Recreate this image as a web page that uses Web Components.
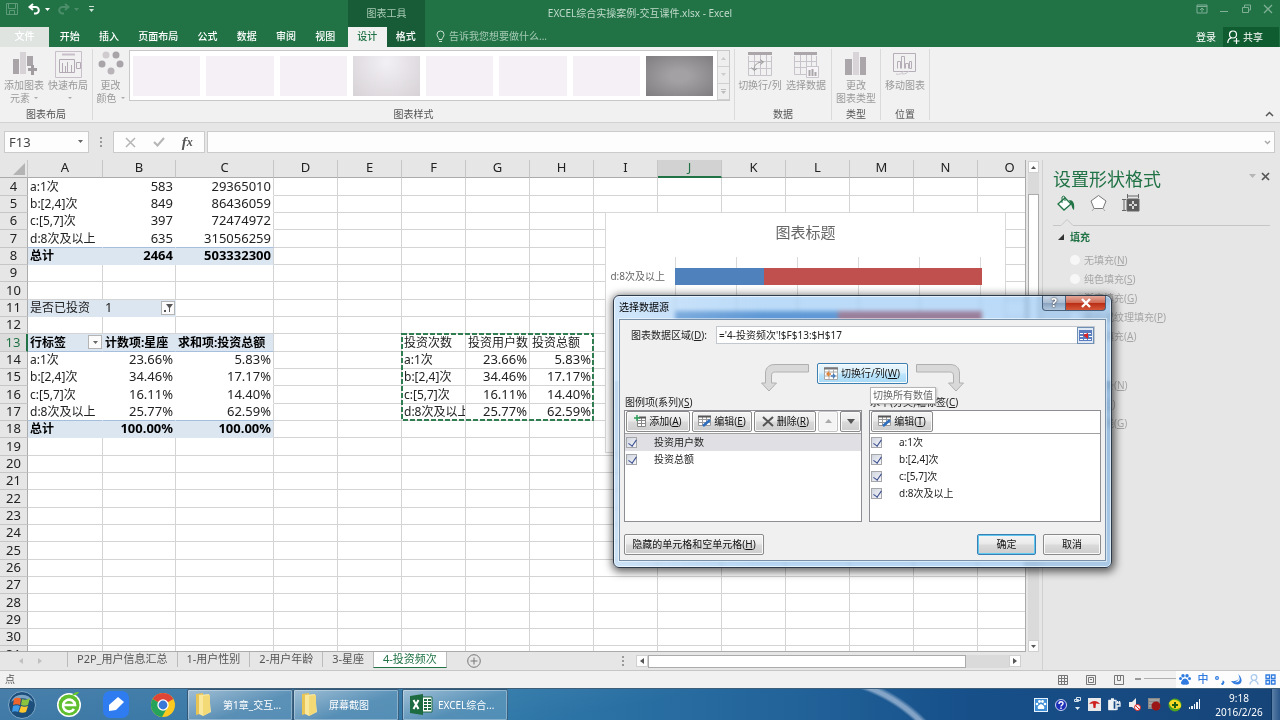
<!DOCTYPE html>
<html lang="zh-CN">
<head>
<meta charset="utf-8">
<title>EXCEL综合实操案例-交互课件.xlsx - Excel</title>
<style>
    html, body { margin: 0; height: 100%; }
    body {
        font: 10px/14px "Noto Sans", "Noto Sans CJK SC", sans-serif;
        color: #333;
        overflow: hidden;
        --green: #217346;
        --line: #d4d4d4;
    }
</style>
</head>
<body>
<excel-app></excel-app>

<script>
// Shared by every element: buttons and fields start from the page font
const base = `
    * { box-sizing: border-box; }
    button, input, select { font: inherit; color: inherit; margin: 0; padding: 0; border: 0; background: none; border-radius: 0; outline: 0; }
    button { display: flex; align-items: center; justify-content: center; white-space: nowrap; }
    a { color: inherit; text-decoration: none; }
    svg { display: block; flex: none; }
`;

function define(name, html, setup) {
    const template = document.createElement('template');
    template.innerHTML = html.replace('<style>', '<style>' + base);

    customElements.define(name, class extends HTMLElement {
        constructor() {
            super();
            this.attachShadow({mode: 'open'});
            this.shadowRoot.appendChild(template.content.cloneNode(true));
        }

        connectedCallback() {
            if (setup) setup(this, this.shadowRoot);
        }
    });
}

/* ---------- title bar and ribbon tabs ---------- */

define('excel-header', `
    <style>
        :host {
            display: grid;
            grid-template-columns: 348px 77px 1fr auto;
            grid-template-rows: 27px 20px;
            background: var(--green);
            color: #fff;
            flex: none;
        }
        .quick { grid-area: 1 / 1; display: flex; align-items: center; gap: 7px; padding: 0 0 9px 6px; }
        .quick button:nth-child(2) { margin-left: 3px; }
        .ctx { grid-area: 1 / 2; background: #185c37; color: #a9cbb7; display: flex; align-items: center; justify-content: center; padding-bottom: 1px; }
        .title { grid-area: 1 / 1 / 2 / -1; justify-self: center; align-self: center; color: #c0dacb; padding-bottom: 1px; }
        .win { grid-area: 1 / 4; display: flex; gap: 10px; padding: 3px 6px 0 0; align-items: flex-start; color: #7fb096; }
        nav { display: flex; }
        nav a { display: flex; align-items: center; justify-content: center; font-weight: 500; padding-bottom: 2px; }
        .tabs { grid-area: 2 / 1; padding-right: 3px; }
        .tabs a { flex: auto; }
        .tabs .file { flex: none; width: 49px; background: #dfe4e1; color: #fff; margin-right: 1px; }
        .tools { grid-area: 2 / 2; background: #185c37; }
        .tools a { flex: 1; }
        .tools .on { background: #f1f1f1; color: var(--green); }
        .tell { grid-area: 2 / 3; display: flex; align-items: center; gap: 4px; padding: 0 0 2px 11px; color: #a5c9b4; }
        .tell input { width: 160px; }
        .tell input::placeholder { color: #a5c9b4; }
        .user { grid-area: 2 / 4; display: flex; align-items: stretch; gap: 7px; }
        .share { background: #0e5c30; width: 56px; gap: 3px; justify-content: flex-start; padding-left: 4px; }
    </style>
    <div class="quick">
        <button aria-label="保存"><svg width="12" height="12" fill="none" stroke="#5e9b79"><path d="M.5.5h11v11H.5zM2.5.5v5h7v-5M3.500 11.500v-4h5v4"/></svg></button>
        <button aria-label="撤消"><svg width="13" height="12" fill="none" stroke="#fff" stroke-width="2"><path d="M5 1 1.500 4 5 7M2 4h5.500a3.300 3.300 0 0 1 0 6.600H6"/></svg></button>
        <svg width="5" height="3" style="margin-left:-3px"><path d="M0 0h5L2.500 3z" fill="#fff"/></svg>
        <button aria-label="恢复"><svg width="13" height="12" fill="none" stroke="#4b8e69" stroke-width="2"><path d="M8 1l3.500 3L8 7M11 4H5.500a3.300 3.300 0 0 0 0 6.600H7"/></svg></button>
        <svg width="5" height="3" style="margin-left:-3px"><path d="M0 0h5L2.500 3z" fill="#4b8e69"/></svg>
        <svg width="5" height="6" style="margin-left:3px"><path d="M0 0h5v1H0zM0 3h5L2.500 6z" fill="#cfe3d7"/></svg>
    </div>
    <div class="ctx">图表工具</div>
    <div class="title">EXCEL综合实操案例-交互课件.xlsx - Excel</div>
    <div class="win">
        <button aria-label="功能区显示选项"><svg width="12" height="12" fill="none" stroke="currentColor"><path d="M1 2h10v8H1zM1 3.500h10M6 9V5M4 7l2-2 2 2"/></svg></button>
        <button aria-label="最小化"><svg width="12" height="12" stroke="currentColor"><path d="M2 8.500h8"/></svg></button>
        <button aria-label="还原"><svg width="12" height="12" fill="none" stroke="currentColor"><path d="M2.500 4.500h6v5h-6zM4.500 4V2h6v5H9"/></svg></button>
        <button aria-label="关闭"><svg width="12" height="12" stroke="currentColor" stroke-width="1.300"><path d="M2 2l8 8M10 2l-8 8"/></svg></button>
    </div>
    <nav class="tabs">
        <a href="#" class="file">文件</a><a href="#">开始</a><a href="#">插入</a><a href="#">页面布局</a><a href="#">公式</a><a href="#">数据</a><a href="#">审阅</a><a href="#">视图</a>
    </nav>
    <nav class="tools"><a href="#" class="on">设计</a><a href="#">格式</a></nav>
    <div class="tell">
        <svg width="9" height="13" fill="none" stroke="#c8dfd1"><path d="M3 9.500C3 7.500 1 7 1 4.500a3.500 3.500 0 0 1 7 0C8 7 6 7.500 6 9.500zM3 11.500h3"/></svg>
        <input placeholder="告诉我您想要做什么..." aria-label="告诉我您想要做什么">
    </div>
    <div class="user">
        <button>登录</button>
        <button class="share"><svg width="13" height="14" fill="none" stroke="#fff" stroke-width="1.200"><circle cx="6" cy="4.500" r="3.500"/><path d="M.8 13c0-3 1.600-4.700 3.600-5.200M9.500 8v6M6.500 11h6"/></svg>共享</button>
    </div>
`);

/* ---------- ribbon ---------- */

define('ribbon-group', `
    <style>
        :host { display: flex; flex-direction: column; border-right: 1px solid #dadada; margin: 2px 0; flex: none; }
        .items { flex: 1; display: flex; justify-content: center; }
        .label { text-align: center; color: #555; line-height: 12px; }
    </style>
    <div class="items"><slot></slot></div>
    <div class="label"></div>
`, (el, root) => {
    root.querySelector('.label').textContent = el.getAttribute('label');
});

define('ribbon-button', `
    <style>
        :host { display: block; color: #999; }
        button { flex-direction: column; justify-content: flex-start; width: 100%; line-height: 13px; padding-top: 2px; }
        .icon { height: 28px; }
        .text { white-space: pre-line; text-align: center; }
        :host([menu]) .text::after { content: ""; display: inline-block; margin-left: 4px; vertical-align: 3px; border: 2px solid transparent; border-top-color: #aaa; border-bottom: 0; }
    </style>
    <button disabled><span class="icon"><slot></slot></span><span class="text"></span></button>
`, (el, root) => {
    root.querySelector('.text').textContent = el.getAttribute('text').replace('|', '\n');
});

define('excel-ribbon', `
    <style>
        :host { display: flex; height: 76px; background: #f1f1f1; border-bottom: 1px solid #d2d2d2; flex: none; position: relative; }
        ribbon-button { width: 44px; }
        ribbon-button.wide { width: 46px; }
        .gallery { display: flex; gap: 6px; height: 51px; margin: 1px 0 0 1px; padding: 5px 0 0 3px; background: #fff; border: 1px solid #c8c8c8; flex: 1; }
        .gallery i { flex: 1; height: 40px; background: #f4f0f6; }
        .gallery i.light { background: radial-gradient(ellipse at 50% 15%, #f3f0f5, #d6d2d6); }
        .gallery i.dark { background: radial-gradient(ellipse, #a3a1a3 20%, #7f7d7f); }
        .scroll { display: flex; flex-direction: column; width: 12px; height: 49px; margin: -5px 0 0 -2px; border-left: 1px solid #d0d0d0; background: #eee; }
        .scroll button { flex: 1; border-bottom: 1px solid #d0d0d0; }
        .collapse { position: absolute; right: 6px; bottom: 5px; }
    </style>
    <ribbon-group label="图表布局" style="width:93px">
        <ribbon-button menu text="添加图表|元素"><svg width="25" height="25"><path d="M1 8h6v15H1z" fill="#a8a4a8"/><path d="M8 1h6v22H8z" fill="#d6d2d6"/><path d="M15 5h6v10h-6z" fill="#a8a4a8"/><path d="M16 18.500h9M20.500 14v10" stroke="#a09ca0" stroke-width="3"/></svg></ribbon-button>
        <ribbon-button menu text="快速布局|"><svg width="27" height="27" fill="none" stroke="#c9bfcb"><path d="M.5.5h26v26H.5z"/><path d="M7 3.500h13" stroke-width="2"/><path d="M4.500 8.500h15v13h-15zM7.500 21v-9M10.500 21v-6M12.500 21V11M16.500 21v-7M21.500 11.500h4v6h-4z" stroke="#b2a9b5"/></svg></ribbon-button>
    </ribbon-group>
    <ribbon-group label="图表样式" style="width:642px">
        <ribbon-button menu text="更改|颜色" style="width:35px"><svg width="26" height="26" fill="#a8a4a8"><circle cx="8" cy="4" r="3.500" fill="#cfcbcf"/><circle cx="18" cy="4" r="3.500"/><circle cx="4" cy="13" r="3.500"/><circle cx="22" cy="13" r="3.500"/><circle cx="13" cy="20" r="3.500" fill="#b8b4b8"/></svg></ribbon-button>
        <div class="gallery">
            <i></i><i></i><i></i><i class="light"></i><i></i><i></i><i></i><i class="dark"></i>
            <div class="scroll">
                <button aria-label="上一行"><svg width="5" height="3"><path d="M0 3h5L2.500 0z" fill="#ccc"/></svg></button>
                <button aria-label="下一行"><svg width="5" height="3"><path d="M0 0h5L2.500 3z" fill="#ccc"/></svg></button>
                <button aria-label="其他"><svg width="5" height="5"><path d="M0 0h5v1H0zM0 2h5L2.500 5z" fill="#bbb"/></svg></button>
            </div>
        </div>
        <span style="width:4px"></span>
    </ribbon-group>
    <ribbon-group label="数据" style="width:97px">
        <ribbon-button class="wide" text="切换行/列"><svg width="26" height="26" fill="none" stroke="#c9c3cb"><path d="M1.500 5v19.500h23V5M1 10.500h24M1 17.500h24M7.500 4v20M13.500 4v20M19.500 4v20"/><path d="M1 2.500h24" stroke="#aaa6aa" stroke-width="3"/><path d="M7 19c0-5 3-8 9-8M13 8.500l3.500 2.500-3 2.500M4.500 16.500 7 19.500l3-2" stroke="#999"/></svg></ribbon-button>
        <ribbon-button class="wide" text="选择数据"><svg width="26" height="27" fill="none" stroke="#c9c3cb"><path d="M1.500 5v18.500h22V5M1 10.500h23M1 16.500h23M7.500 4v19M13.500 4v19M18.500 4v19"/><path d="M1 2.500h23" stroke="#aaa6aa" stroke-width="3"/><path d="M13.500 15.500h12v11h-12z" fill="#f6f4f6"/><path d="M16.500 25v-6M19.500 25v-7M22.500 25v-4" stroke="#aaa6aa" stroke-width="2"/></svg></ribbon-button>
    </ribbon-group>
    <ribbon-group label="类型" style="width:49px">
        <ribbon-button class="wide" text="更改|图表类型"><svg width="22" height="25"><path d="M0 8h7v16H0zM15 6h6v18h-6z" fill="#aaa6aa"/><path d="M8 1h6v23H8z" fill="#d8d4d8"/></svg></ribbon-button>
    </ribbon-group>
    <ribbon-group label="位置" style="width:49px">
        <ribbon-button class="wide" text="移动图表"><svg width="24" height="25" fill="none" stroke="#b5adb8"><path d="M.5 2.500h22v18H.5z"/><path d="M4.500 17.500v-7h3v7M8.500 17.500v-12h3v12M12.500 17.500v-5h3v5M16.500 17.500v-7h2v7z"/><path d="M3 23c4 1 6-1 8-3M9 23c4 0 5-1 7-3" stroke="#c9c3cb"/></svg></ribbon-button>
    </ribbon-group>
    <button class="collapse" aria-label="折叠功能区"><svg width="9" height="6" fill="none" stroke="#555" stroke-width="1.500"><path d="M1 5l3.500-3.500L8 5"/></svg></button>
`);

/* ---------- formula bar ---------- */

define('formula-bar', `
    <style>
        :host { display: flex; align-items: flex-start; height: 37px; padding: 8px 5px 0 4px; background: #e6e6e6; flex: none; }
        .box { display: flex; align-items: center; height: 22px; background: #fdfdfd; border: 1px solid #cbcbcb; }
        .name { width: 85px; padding: 0 5px 1px 4px; font-size: 13px; }
        .name input { width: 100%; min-width: 0; color: #444; }
        .dots { width: 24px; height: 22px; padding: 5px 11px; }
        .fx { width: 92px; justify-content: space-around; padding: 0 3px; }
        .text { flex: 1; margin-left: 2px; padding-right: 3px; }
        .text input { flex: 1; }
        .fx button:last-child { font: italic 700 15px/18px "Liberation Serif", serif; color: #555; }
        .fx small { font-size: 12px; }
    </style>
    <div class="box name"><input value="F13" aria-label="名称框"><svg width="5" height="3"><path d="M0 0h5L2.500 3z" fill="#666"/></svg></div>
    <svg class="dots" width="24" height="22" fill="#999"><path d="M0 1h2v2H0zM0 5h2v2H0zM0 9h2v2H0z"/></svg>
    <div class="box fx">
        <button aria-label="取消"><svg width="11" height="11" stroke="#b5b5b5" stroke-width="1.500"><path d="M1 1l9 9M10 1l-9 9"/></svg></button>
        <button aria-label="输入"><svg width="12" height="10" fill="none" stroke="#b5b5b5" stroke-width="2"><path d="M1 5l3.500 3.500L11 1"/></svg></button>
        <button>f<small>x</small></button>
    </div>
    <div class="box text"><input aria-label="编辑栏"><svg width="7" height="5" fill="none" stroke="#aaa" stroke-width="1.500"><path d="M1 1l2.500 2.500L6 1"/></svg></div>
`);

/* ---------- worksheet ---------- */

const columns = 'ABCDEFGHIJKLMNO'.split('');
const widths = {A: 75, B: 73, C: 98};
const cells = {
    A4: 'a:1次', B4: '583', C4: '29365010',
    A5: 'b:[2,4]次', B5: '849', C5: '86436059',
    A6: 'c:[5,7]次', B6: '397', C6: '72474972',
    A7: 'd:8次及以上', B7: '635', C7: '315056259',
    A8: '总计', B8: '2464', C8: '503332300',
    A11: '是否已投资', B11: '1',
    A13: '行标签', B13: '计数项:星座', C13: '求和项:投资总额',
    A14: 'a:1次', B14: '23.66%', C14: '5.83%',
    A15: 'b:[2,4]次', B15: '34.46%', C15: '17.17%',
    A16: 'c:[5,7]次', B16: '16.11%', C16: '14.40%',
    A17: 'd:8次及以上', B17: '25.77%', C17: '62.59%',
    A18: '总计', B18: '100.00%', C18: '100.00%',
    F13: '投资次数', G13: '投资用户数', H13: '投资总额',
    F14: 'a:1次', G14: '23.66%', H14: '5.83%',
    F15: 'b:[2,4]次', G15: '34.46%', H15: '17.17%',
    F16: 'c:[5,7]次', G16: '16.11%', H16: '14.40%',
    F17: 'd:8次及以上', G17: '25.77%', H17: '62.59%'
};

define('sheet-grid', `
    <style>
        :host { display: block; flex: 1; min-width: 0; position: relative; overflow: hidden; background: #fff; border-right: 1px solid #ababab; border-bottom: 1px solid #ababab; }
        table { table-layout: fixed; width: 1042px; border-spacing: 0; font-size: 12px; line-height: 15px; color: #222; }
        th, td { padding: 0 2px 1px; height: 17px; border: 0 solid var(--line); border-width: 0 1px 1px 0; white-space: nowrap; text-align: left; }
        thead th { height: 18px; padding: 0 0 2px; text-align: center; font-size: 13px; font-weight: 400; background: #e6e6e6; border-color: #c6c6c6; border-bottom-color: #ababab; }
        thead th.on { background: #d2d2d2; color: var(--green); border-bottom: 2px solid var(--green); padding-bottom: 1px; }
        tbody th { padding: 0 0 1px; text-align: center; font-size: 13px; font-weight: 400; background: #e6e6e6; border-color: #c6c6c6; border-right-color: #ababab; }
        tbody th.on { background: #dcdcdc; color: var(--green); border-right: 2px solid var(--green); }
        tr:nth-child(3n+1) > * { height: 18px; }
        .num { font-size: 13px; text-align: right; }
        .clip { overflow: hidden; }
        .pivot { border-color: #fff; }
        .pivot.edge { border-right-color: var(--line); }
        .fill { background: #dce6f1; border-color: #dce6f1; }
        .bold { font-weight: 700; color: #000; }
        .line { border-bottom-color: #a6bfdd; }
        td .cell { display: flex; align-items: center; justify-content: space-between; height: 15px; }
        td button { width: 14px; height: 14px; background: #fbfbfb; border: 1px solid #b4b4b4; margin-right: -2px; }
        .ants { position: absolute; left: 401px; top: 173px; width: 193px; height: 88px; fill: none; stroke: #2f7d50; stroke-width: 2; stroke-dasharray: 5 2; }
        .corner { display: block; margin: 3px 2px 0 auto; }
    </style>
    <table>
        <colgroup><col style="width:28px"></colgroup>
        <thead><tr><th><svg class="corner" width="12" height="12"><path d="M12 0v12H0z" fill="#b4b4b4"/></svg></th></tr></thead>
        <tbody></tbody>
    </table>
    <svg class="ants"><rect x="1" y="1" width="191" height="86"/></svg>
    <slot></slot>
`, (el, root) => {
    const group = root.querySelector('colgroup');
    const head = root.querySelector('thead tr');
    const body = root.querySelector('tbody');

    columns.forEach(name => {
        const col = document.createElement('col');
        col.style.width = (widths[name] || 64) + 'px';
        group.appendChild(col);
        const th = document.createElement('th');
        th.textContent = name;
        if (name === 'J') th.className = 'on';
        head.appendChild(th);
    });

    for (let row = 4; row <= 31; row++) {
        const tr = body.insertRow();
        const th = document.createElement('th');
        th.textContent = row;
        if (row === 13) th.className = 'on';
        tr.appendChild(th);

        columns.forEach(name => {
            const td = tr.insertCell();
            const value = cells[name + row] || '';
            td.textContent = value;
            if (/^[\d.]+%?$/.test(value)) td.classList.add('num');
            // the neighbour is filled, so the long label stops at the cell edge
            if (name + row === 'F17') td.classList.add('clip');
            if (name <= 'C' && (row <= 8 || row >= 13) && row <= 18) {
                td.classList.add('pivot');
                if (name === 'C') td.classList.add('edge');
                if (row === 8 || row === 13 || row === 18) td.classList.add('fill', 'bold');
                if (row === 7 || row === 13 || row === 17) td.classList.add('line');
            }
            if (row === 11 && name <= 'B') {
                td.classList.add('fill');
                td.style.textAlign = 'left';
            }
            if (name + row === 'A13' || name + row === 'B11') {
                const arrow = row === 11
                    ? '<svg width="9" height="8"><path d="M2 0h7L6 4v4H5V4zM0 6h2v2H0z" fill="#555"/></svg>'
                    : '<svg width="5" height="3"><path d="M0 0h5L2.500 3z" fill="#666"/></svg>';
                td.innerHTML = '<div class="cell"><span>' + value + '</span><button aria-label="筛选">' + arrow + '</button></div>';
            }
        });
    }
});

define('bar-chart', `
    <style>
        :host { display: flex; flex-direction: column; position: absolute; left: 605px; top: 52px; width: 401px; height: 241px; background: #fff; border: 1px solid #d9d9d9; color: #666; }
        h2 { margin: 9px 0 15px; font-size: 15px; line-height: 20px; font-weight: 400; text-align: center; }
        .plot { display: grid; grid-template-columns: 69px 307px; grid-auto-rows: 43px; background: repeating-linear-gradient(90deg, #d9d9d9 0 1px, transparent 1px 61px) 69px 0 / 307px 100% no-repeat; }
        .name { padding: 12px 10px 0 0; text-align: right; }
        .bar { display: flex; height: 17px; margin-top: 11px; }
        .bar i { background: #4f81bd; }
        .bar b { flex: 1; background: #c0504d; }
    </style>
    <h2>图表标题</h2>
    <div class="plot"></div>
`, (el, root) => {
    root.querySelector('.plot').innerHTML = [
        ['d:8次及以上', 29], ['', 53], ['', 67], ['', 80]
    ].map(([name, share]) => `<span class="name">${name}</span><div class="bar"><i style="width:${share}%"></i><b></b></div>`).join('');
});

define('v-scroll', `
    <style>
        :host { display: flex; flex-direction: column; width: 17px; padding: 1px 3px 0 2px; background: #e6e6e6; border-right: 1px solid #d0d0d0; }
        button { height: 12px; background: #fdfdfd; border: 1px solid #d0d0d0; }
        .track { flex: 1; background: #dadada; padding-top: 21px; }
        .thumb { height: 70%; background: #fff; border: 1px solid #ababab; }
    </style>
    <button aria-label="向上"><svg width="5" height="3"><path d="M0 3h5L2.500 0z" fill="#555"/></svg></button>
    <div class="track"><div class="thumb"></div></div>
    <button aria-label="向下"><svg width="5" height="3"><path d="M0 0h5L2.500 3z" fill="#555"/></svg></button>
`);

define('sheet-tabs', `
    <style>
        :host { display: flex; position: relative; height: 18px; background: #e6e6e6; border-right: 1px solid #d0d0d0; font-size: 11px; color: #555; }
        .arrows { display: flex; gap: 15px; align-items: center; width: 67px; padding-left: 19px; }
        a { display: flex; align-items: flex-start; padding: 0 9px; height: 15px; line-height: 14px; border-left: 1px solid #bbb; white-space: nowrap; }
        a.on { background: #fff; color: var(--green); border-bottom: 1px solid var(--green); border-right: 1px solid #bbb; height: 16px; }
        .add { margin-left: 20px; align-self: center; }
        .scroll { display: flex; align-items: center; margin: 2px 21px 2px auto; width: 399px; }
        .scroll button { width: 12px; height: 12px; background: #fdfdfd; border: 1px solid #d0d0d0; }
        .track { flex: 1; height: 13px; background: #dadada; }
        .thumb { width: 88%; height: 13px; background: #fff; border: 1px solid #ababab; }
        .dots { margin-right: 12px; }
    </style>
    <span class="arrows"><svg width="4" height="6"><path d="M4 0v6L0 3z" fill="#c0c0c0"/></svg><svg width="4" height="6"><path d="M0 0v6l4-3z" fill="#c0c0c0"/></svg></span>
    <a href="#">P2P_用户信息汇总</a><a href="#">1-用户性别</a><a href="#">2-用户年龄</a><a href="#">3-星座</a><a href="#" class="on">4-投资频次</a>
    <button class="add" aria-label="新工作表"><svg width="14" height="14" fill="none" stroke="#777"><circle cx="7" cy="7" r="6.300"/><path d="M3.500 7h7M7 3.500v7"/></svg></button>
    <div class="scroll">
        <svg class="dots" width="2" height="10" fill="#999"><path d="M0 0h2v2H0zM0 4h2v2H0zM0 8h2v2H0z"/></svg>
        <button aria-label="向左"><svg width="4" height="6"><path d="M4 0v6L0 3z" fill="#555"/></svg></button>
        <div class="track"><div class="thumb"></div></div>
        <button aria-label="向右"><svg width="4" height="6"><path d="M0 0v6l4-3z" fill="#555"/></svg></button>
    </div>
`);

/* ---------- task pane ---------- */

define('format-pane', `
    <style>
        :host { display: block; width: 237px; padding: 7px 10px 0; background: #e6e6e6; flex: none; color: #a6a6a6; }
        header { display: flex; align-items: flex-start; }
        h1 { flex: 1; margin: 0; font-size: 18px; line-height: 24px; font-weight: 400; color: var(--green); }
        header svg { margin-left: 10px; }
        .icons { display: flex; align-items: center; gap: 14px; height: 24px; padding-left: 4px; }
        .rule { display: block; width: 100%; height: 8px; margin: 3px 0 3px; }
        h3 { display: flex; align-items: center; gap: 6px; margin: 0 0 5px; padding-left: 5px; height: 16px; font-size: 10px; color: var(--green); }
        fieldset + h3 { margin-top: 9px; }
        label { display: flex; align-items: center; height: 19px; padding-left: 17px; gap: 4px; }
        input { appearance: none; width: 10px; height: 10px; margin: 0; border-radius: 5px; background: #f7f7f7; }
        fieldset { border: 0; margin: 0; padding: 0; }
    </style>
    <header>
        <h1>设置形状格式</h1>
        <svg width="7" height="4" style="margin-top:7px"><path d="M0 0h7L3.500 4z" fill="#b5b5b5"/></svg>
        <button aria-label="关闭"><svg width="9" height="9" stroke="#555" stroke-width="1.700" style="margin:5px 0 0 5px"><path d="M1 1l7 7M8 1 1 8"/></svg></button>
    </header>
    <div class="icons">
        <svg width="19" height="17"><path d="M1 9l7-6 6 6-7 6z" fill="#fff" stroke="#217346" stroke-width="1.300"/><path d="M5 8V2a2 2 0 0 1 3 0v4" fill="none" stroke="#217346"/><path d="M12 5c4 0 6 3 5 10-2-1-2-4-3-6z" fill="#217346"/></svg>
        <svg width="17" height="18" fill="#fff" stroke="#777"><path d="M8.500 1.500 16 7l-3 7.500H4L1 7z"/><path d="M4 14.500 2 17M13 14.500l2 2.500" stroke="#aaa"/></svg>
        <svg width="19" height="18" fill="none" stroke="#666"><path d="M1 5.500h4M3 5.500v11M1 16.500h4M6.500 0v4M6.500 2h11M17.500 0v4"/><path d="M6 5h12v12H6z" fill="#5a5a5a"/><path d="M12 7v3M12 12v3M8 11h3M13 11h3" stroke="#fff" stroke-width="1.500"/></svg>
    </div>
    <svg class="rule" fill="none" stroke="#c6c6c6"><path d="M0 7.500h8l6-6 6 6h400"/></svg>
    <h3><svg width="6" height="6"><path d="M6 0v6H0z" fill="#333"/></svg>填充</h3>
    <fieldset disabled>
        <label><input type="radio" name="fill"><span>无填充(<u>N</u>)</span></label>
        <label><input type="radio" name="fill"><span>纯色填充(<u>S</u>)</span></label>
        <label><input type="radio" name="fill"><span>渐变填充(<u>G</u>)</span></label>
        <label><input type="radio" name="fill"><span>图片或纹理填充(<u>P</u>)</span></label>
        <label><input type="radio" name="fill"><span>图案填充(<u>A</u>)</span></label>
    </fieldset>
    <h3><svg width="6" height="6"><path d="M6 0v6H0z" fill="#333"/></svg>线条</h3>
    <fieldset disabled>
        <label><input type="radio" name="stroke"><span>无线条(<u>N</u>)</span></label>
        <label><input type="radio" name="stroke"><span>实线(<u>S</u>)</span></label>
        <label><input type="radio" name="stroke"><span>渐变线(<u>G</u>)</span></label>
    </fieldset>
`);

/* ---------- data source dialog ---------- */

define('dialog-button', `
    <style>
        :host { display: block; }
        button { width: 100%; height: 21px; gap: 3px; padding-bottom: 1px; border: 1px solid #8a8a8a; border-radius: 2px; color: #111; background: linear-gradient(#f5f5f5, #e9e9e9 48%, #dadada 52%, #cdcdcd); box-shadow: inset 0 0 0 1px #fafafa; }
        :host(.hot) button { border-color: #3c7fb1; background: linear-gradient(#eaf6fd, #d9f0fc 48%, #bee6fd 52%, #a7d9f5); }
        :host(.default) button { border-color: #3c7fb1; box-shadow: inset 0 0 0 1px #5fc8f0; }
        :host(.off) button { background: #f4f4f4; border-color: #c4c4c4; }
    </style>
    <button><slot></slot></button>
`);

define('check-list', `
    <style>
        :host { display: block; background: #fff; border: 1px solid #8c8e94; height: 112px; }
        .bar { display: flex; gap: 2px; height: 23px; padding-left: 1px; border-bottom: 1px solid #a0a0a0; }
        label { display: flex; align-items: center; height: 17px; padding-left: 1px; gap: 17px; color: #222; }
        label span { padding-bottom: 1px; }
        :host([selected]) label:first-child { background: #e0dfe3; }
        input { appearance: none; width: 11px; height: 11px; border: 1px solid #a5a6aa; background: linear-gradient(135deg, #d0d5df, #f5f5f9); position: relative; }
        input:checked::after { content: ""; position: absolute; left: 3px; top: 0; width: 4px; height: 7px; border: solid #33488c; border-width: 0 1px 1px 0; transform: rotate(35deg); }
    </style>
    <div class="bar"><slot></slot></div>
    <div class="list"></div>
`, (el, root) => {
    root.querySelector('.list').innerHTML = el.getAttribute('items').split('|')
        .map(item => `<label><input type="checkbox" checked><span>${item}</span></label>`).join('');
});

define('source-dialog', `
    <style>
        :host {
            display: flex; flex-direction: column;
            position: absolute; left: 613px; top: 135px; width: 499px;
            padding: 0 5px 6px;
            border: 1px solid #2d3a4a; border-radius: 6px;
            background: linear-gradient(90deg, rgba(255,255,255,.3), transparent 30%), linear-gradient(rgba(120,190,255,.45) 84px, rgba(70,150,225,.45) 86px, rgba(110,180,245,.45));
            backdrop-filter: blur(2px) brightness(.95);
            box-shadow: inset 0 0 0 1px rgba(255,255,255,.6), 1px 2px 8px 2px rgba(0,0,0,.6);
            color: #222;
        }
        header { display: flex; height: 23px; align-items: flex-start; }
        header span { flex: 1; padding-top: 4px; color: #000; }
        header button { height: 15px; border: 1px solid #49617c; border-top: 0; background: linear-gradient(#c9d6e6, #a9bcd2 48%, #8aa3bf 52%, #b0c6dd); }
        .help { width: 24px; border-radius: 0 0 0 4px; font-weight: 700; font-size: 12px; color: #fff; text-shadow: 0 0 2px #000; }
        header .close { width: 40px; border-radius: 0 0 4px 0; border-left: 0; background: linear-gradient(#e5a89a, #cf6a55 48%, #b92d14 52%, #d5583a); }
        .client { display: flex; flex-direction: column; height: 242px; padding: 6px 4px 0; background: #f0f0f0; border: 1px solid #7890a8; box-shadow: 0 0 0 1px rgba(255,255,255,.5); }
        .range { display: flex; align-items: center; padding: 0 6px 0 7px; }
        .range label { width: 85px; }
        .range div { flex: 1; display: flex; align-items: center; height: 18px; background: #fff; border: 1px solid #c3c7ce; }
        .range input { flex: 1; padding-left: 2px; }
        .range button { width: 17px; height: 17px; border: 1px solid #6f8fb5; background: #dfe8f5; }
        .switch { display: grid; grid-template-columns: 1fr 91px 1fr; gap: 7px; margin: 19px 1px 0 0; }
        .switch svg:first-child { justify-self: end; }
        .lists { display: grid; grid-template-columns: 238px 1fr; column-gap: 7px; }
        .lists > span { height: 17px; line-height: 18px; padding-left: 1px; }
        .foot { display: flex; gap: 7px; margin-top: 12px; }
        .tip { position: absolute; left: 256px; top: 91px; padding: 0 2px; border: 1px solid #b5b5b5; background: #fff; color: #666; line-height: 15px; box-shadow: 1px 1px 2px rgba(0,0,0,.2); }
    </style>
    <header>
        <span>选择数据源</span>
        <button class="help">?</button>
        <button class="close" aria-label="关闭"><svg width="10" height="10" stroke="#fff" stroke-width="2.400"><path d="M1 1l8 8M9 1 1 9"/></svg></button>
    </header>
    <div class="client">
        <div class="range">
            <label for="range">图表数据区域(<u>D</u>):</label>
            <div>
                <input id="range" value="='4-投资频次'!$F$13:$H$17">
                <button aria-label="折叠对话框"><svg width="13" height="11"><path d="M0 0h13v11H0z" fill="#5b7cbf"/><path d="M1 3h3v1H1zM1 6h3v1H1zM1 9h3v1H1zM5 3h3v1H5zM9 3h3v1H9zM9 9h3v1H9zM5 9h3v1H5zM10 6h3v1h-3z" fill="#fff"/><path d="M4 5l5-2v6z" fill="#d22"/></svg></button>
            </div>
        </div>
        <div class="switch">
            <svg width="50" height="30" fill="#d9d9d9" stroke="#b0b0b0"><path d="M48.500 1.500H15C7 1.500 5.500 7 5.500 10v10H1.500l7.500 8 7.500-8h-5v-7c0-3 1-4 4-4h33z"/></svg>
            <dialog-button class="hot"><svg width="14" height="13" fill="none"><path d="M.5.5h13v12H.5zM.5 5h13M.5 9h13M5 3v9M9.500 3v9" stroke="#aaa" fill="#fff"/><path d="M0 1.500h14" stroke="#777" stroke-width="2"/><path d="M3 7h4M5 5 3 7l2 2" stroke="#e08030" stroke-width="1.300"/><path d="M7 9h4M9 7l2 2-2 2" stroke="#4a7ebb" stroke-width="1.300"/></svg><span>切换行/列(<u>W</u>)</span></dialog-button>
            <svg width="50" height="30" fill="#d9d9d9" stroke="#b0b0b0"><path d="M1.500 1.500H35c8 0 9.500 5.500 9.500 8.500v10h4l-7.500 8-7.500-8h5v-7c0-3-1-4-4-4h-33z"/></svg>
        </div>
        <div class="lists">
            <span>图例项(系列)(<u>S</u>)</span>
            <span>水平(分类)轴标签(<u>C</u>)</span>
            <check-list selected items="投资用户数|投资总额">
                <dialog-button style="width:64px"><svg width="12" height="12" fill="none"><path d="M3.500 2.500h8v9h-8zM3.500 5.500h8M3.500 8.500h8M7.500 3v8" stroke="#888" fill="#fff"/><path d="M5 2.500h7" stroke="#555" stroke-width="2"/><path d="M0 3h6M3 0v6" stroke="#2e9e5b" stroke-width="1.500"/></svg><span>添加(<u>A</u>)</span></dialog-button>
                <dialog-button style="width:61px"><svg width="13" height="12" fill="none"><path d="M.5 1.500h12v9H.5zM.5 4.500h12M.5 7.500h12M4.500 2v9M8.500 2v9" stroke="#999" fill="#fff"/><path d="M0 1.500h13" stroke="#555" stroke-width="2"/><path d="M5 11l7-6" stroke="#2f6fbf" stroke-width="2.500"/></svg><span>编辑(<u>E</u>)</span></dialog-button>
                <dialog-button style="width:62px"><svg width="12" height="11" stroke="#555" stroke-width="2"><path d="M1 1l10 9M11 1 1 10"/></svg><span>删除(<u>R</u>)</span></dialog-button>
                <dialog-button class="off" style="width:20px"><svg width="7" height="4"><path d="M0 4h7L3.500 0z" fill="#aaa"/></svg></dialog-button>
                <dialog-button style="width:21px"><svg width="8" height="5"><path d="M0 0h8L4 5z" fill="#555"/></svg></dialog-button>
            </check-list>
            <check-list items="a:1次|b:[2,4]次|c:[5,7]次|d:8次及以上">
                <dialog-button style="width:62px"><svg width="13" height="12" fill="none"><path d="M.5 1.500h12v9H.5zM.5 4.500h12M.5 7.500h12M4.500 2v9M8.500 2v9" stroke="#999" fill="#fff"/><path d="M0 1.500h13" stroke="#555" stroke-width="2"/><path d="M5 11l7-6" stroke="#2f6fbf" stroke-width="2.500"/></svg><span>编辑(<u>T</u>)</span></dialog-button>
            </check-list>
        </div>
        <div class="foot">
            <dialog-button style="width:140px;margin-right:auto"><span>隐藏的单元格和空单元格(<u>H</u>)</span></dialog-button>
            <dialog-button class="default" style="width:59px">确定</dialog-button>
            <dialog-button style="width:58px">取消</dialog-button>
        </div>
    </div>
    <div class="tip">切换所有数值</div>
`);

/* ---------- status bar and desktop task bar ---------- */

define('status-bar', `
    <style>
        :host { display: flex; align-items: center; height: 18px; padding-left: 5px; background: #f1f1f1; border-top: 1px solid #c6c6c6; color: #555; flex: none; }
        .views { display: flex; align-items: center; gap: 18px; margin-left: auto; padding-right: 11px; }
        .zoom { display: flex; align-items: center; width: 41px; gap: 3px; }
        .ime { display: flex; align-items: center; justify-content: space-between; width: 104px; height: 18px; padding: 0 4px 0 3px; background: #fdfdfd; color: #2f7be0; font-size: 11px; font-weight: 500; }
        span { padding-bottom: 1px; }
    </style>
    <span>点</span>
    <div class="views">
        <svg width="10" height="10" fill="none" stroke="#777"><path d="M.5.500h9v9h-9zM.5 3.500h9M.5 6.500h9M3.500.5v9M6.500.5v9"/></svg>
        <svg width="10" height="10" fill="none" stroke="#777"><path d="M.5.500h9v9h-9zM2.500 2.500h5v5h-5zM4 4.500h2"/></svg>
        <svg width="10" height="10" fill="none" stroke="#777"><path d="M.5.500h9v9h-9zM3.500.5v5h3v-5"/></svg>
    </div>
    <div class="zoom"><svg width="41" height="3"><path d="M0 0h6v2H0z" fill="#999"/><path d="M9 0h32v1H9z" fill="#b0b0b0"/></svg></div>
    <div class="ime">
        <svg width="12" height="11" fill="#2f7be0"><circle cx="1.500" cy="4.500" r="1.500"/><circle cx="4" cy="1.800" r="1.700"/><circle cx="8" cy="1.800" r="1.700"/><circle cx="10.500" cy="4.500" r="1.500"/><path d="M6 4.500c2 0 4 3 4 4.500s-2 2-4 1.500C4 11 2 10.500 2 9s2-4.500 4-4.500z"/></svg>
        <span>中</span>
        <svg width="10" height="10" fill="none" stroke="#2f7be0" stroke-width="1.200"><circle cx="2" cy="3" r="1.400"/><path d="M7.500 6.500c1.500 0 1 2-1 3" stroke-width="2"/></svg>
        <svg width="11" height="11"><path d="M7 0c3 4 0 8-7 7 4 6 13 4 10-3C9.500 2 8 1 7 0z" fill="#2f7be0"/><path d="M7.500 2c1 4-2 6-4 6 4 1 7-2 4-6z" fill="#fdfdfd"/></svg>
        <svg width="10" height="11" fill="none" stroke="#a9c8ee" stroke-width="1.300"><circle cx="5" cy="3.500" r="2.800"/><path d="M1 10.500C1 8 3 7 4 6.500M9 10.500C9 8 7 7 6 6.500"/></svg>
        <svg width="11" height="11" fill="none" stroke="#2f7be0" stroke-width="1.300"><path d="M1 1h3.500v3.500H1zM6.500 1H10v3.500H6.500zM1 6.500h3.500V10H1zM6.500 6.500H10V10H6.500z"/></svg>
    </div>
`);

define('task-button', `
    <style>
        :host { display: block; width: 106px; }
        button { width: 100%; height: 32px; justify-content: flex-start; padding-left: 7px; gap: 10px; color: #fff; border: 1px solid rgba(20,50,80,.6); border-radius: 2px; background: linear-gradient(160deg, rgba(255,255,255,.5), rgba(255,255,255,.16) 60%); box-shadow: inset 0 0 0 1px rgba(255,255,255,.3); }
        ::slotted(svg) { display: block; flex: none; }
    </style>
    <button><slot></slot></button>
`);

define('task-bar', `
    <style>
        :host {
            display: flex; align-items: center; height: 32px; color: #fff; flex: none;
            border-top: 1px solid #3f5f78;
            background:
                radial-gradient(circle at 14px 140px, transparent 147px, rgba(200,215,235,.6) 150px 153px, transparent 157px) 800px 0 / 160px 32px no-repeat,
                linear-gradient(170deg, rgba(255,255,255,.14), transparent 50%),
                linear-gradient(90deg, #2a6a9c, #2f78a8 40%, #22639a 62%, #17508a 75%, #164478);
        }
        .pins { display: flex; gap: 19px; padding: 0 10px 0 8px; }
        .tasks { display: flex; }
        .tray { display: flex; align-items: center; gap: 7px; margin-left: auto; }
        time { width: 56px; margin: 0 -3px 0 3px; text-align: center; }
        .desktop { width: 9px; height: 32px; border-left: 1px solid #0f3660; background: linear-gradient(90deg, #5b7fa6, #2a568a); }
    </style>
    <div class="pins">
        <svg width="28" height="28"><circle cx="14" cy="14" r="13.500" fill="#1d4f7c" stroke="#7fa9c7"/><path d="M3 11a12 12 0 0 1 22 0c-7-5-15-5-22 0z" fill="#7ba4c4"/><path d="M6 8c3-2 6-1 7 0l-1 6c-2-1-5-1-7 0z" fill="#f0652b"/><path d="M14 8c2 1 6 1 8-1l-2 7c-2 1-5 1-7 0z" fill="#8ac43f"/><path d="M5 15c2-1 5-1 7 0l-2 6c-2-1-4-1-6 0z" fill="#3f9be8"/><path d="M13 15c2 1 5 1 7 0l-2 6c-2 1-5 1-7 0z" fill="#fcc82d"/></svg>
        <svg width="28" height="28"><circle cx="14" cy="14" r="12" fill="#fff"/><circle cx="14" cy="14" r="10.500" fill="#5fbf2e"/><path d="M19 18a6 6 0 1 1 1-4H9" fill="none" stroke="#fff" stroke-width="2.600"/><path d="M17 4c4-4 7-3 7-3-1 2-3 4-7 3z" fill="#69c832"/></svg>
        <svg width="28" height="28"><rect x="1" width="26" height="27" rx="7" fill="#2f7cf0"/><path d="M7 20V14l9-8 6 5-8 8z" fill="#fff"/></svg>
        <svg width="28" height="28"><circle cx="14" cy="14" r="12" fill="#fbc91f"/><path d="M14 14 3.600 8a12 12 0 0 1 20.800 0z" fill="#dd4537"/><path d="M3.600 8A12 12 0 0 0 13 26l5-9-4-3z" fill="#25a35a"/><circle cx="14" cy="14" r="5.700" fill="#fff"/><circle cx="14" cy="14" r="4.400" fill="#3a78d8"/></svg>
    </div>
    <div class="tasks">
        <task-button><svg width="18" height="25"><path d="M1 2l7-1v20l-7 2z" fill="#e8c454"/><path d="M4 3l10-1 2 18-8 4-4-2z" fill="#f9e79b"/><path d="M8 4l7-1v17l-7 4z" fill="#f4d977"/></svg><span>第1章_交互...</span></task-button>
        <task-button><svg width="18" height="25"><path d="M1 2l7-1v20l-7 2z" fill="#e8c454"/><path d="M4 3l10-1 2 18-8 4-4-2z" fill="#f9e79b"/><path d="M8 4l7-1v17l-7 4z" fill="#f4d977"/></svg><span>屏幕截图</span></task-button>
        <task-button style="margin-left:3px"><svg width="23" height="21" style="margin-right:-5px"><path d="M12 3h10v15H12z" fill="#fff" stroke="#1d6b40"/><path d="M14 6h3M18 6h3M14 9h3M18 9h3M14 12h3M18 12h3M14 15h3M18 15h3" stroke="#1d6b40" stroke-width="2"/><path d="M0 2l13-2v21L0 19z" fill="#1d6b40"/><path d="M3.500 6l5 9M8.500 6l-5 9" stroke="#fff" stroke-width="2"/></svg><span>EXCEL综合...</span></task-button>
    </div>
    <div class="tray">
        <svg width="14" height="14"><path d="M0 0h14v14H0z" fill="#e8f2fb"/><path d="M1 1h12v12H1z" fill="#3f8fd8"/><g fill="#fff"><circle cx="3" cy="6" r="1.300"/><circle cx="5.500" cy="3.500" r="1.400"/><circle cx="8.500" cy="3.500" r="1.400"/><circle cx="11" cy="6" r="1.300"/><path d="M7 6c3 1 4 3 3 5H4c-1-2 0-4 3-5z"/></g></svg>
        <svg width="12" height="12"><circle cx="6" cy="6" r="5.500" fill="#1c2fb8" stroke="#c9d3f0"/><path d="M4 5c0-3 4-3 4-.5C8 6 6 6 6 7.500M6 8.500V10" stroke="#fff" stroke-width="1.400" fill="none"/></svg>
        <svg width="7" height="14" style="margin:-2px 0 0"><path d="M2.500.5h4v3h-4zM.5 2.500h4v2h-4z" fill="none" stroke="#d5e2ee"/><path d="M1 10h5l-2.500 3z" fill="#e5edf5"/></svg>
        <svg width="13" height="13"><path d="M0 0h13v13H0z" fill="#e9e9ec"/><path d="M1 6c3-4 8-4 11 0L8 5.500 7.500 10h-2L5 5.500z" fill="#cf2020"/></svg>
        <svg width="13" height="13" fill="none" stroke="#eef3f8" stroke-width="1.300"><path d="M1 2.500h7v9H1zM3 1h3" /><path d="M1 3h4v8H1z" fill="#eef3f8"/><path d="M8 5h4v3H9v4M9.500 3v2M11.500 3v2"/></svg>
        <svg width="13" height="13"><path d="M1 4h3l4-4v12L4 9H1z" fill="#eee"/><circle cx="9.500" cy="9.500" r="3" fill="#fbeaea" stroke="#d22"/><path d="M7.500 7.500l4 4" stroke="#d22"/></svg>
        <svg width="13" height="13"><path d="M0 0h12v11H0z" fill="#888"/><path d="M1 2h10M1 5h10M1 8h10" stroke="#bbb"/><circle cx="8" cy="8" r="4.500" fill="#9b1616"/></svg>
        <svg width="14" height="14"><circle cx="7" cy="7" r="6.500" fill="#4fa51f"/><path d="M1 5a6.500 6.500 0 0 1 12 4C10 12 3 12 1 5z" fill="#f7da25"/><path d="M7 4v6M4 7h6" stroke="#1c5f12" stroke-width="2"/></svg>
        <svg width="12" height="11" fill="#eef3f8"><path d="M0 8h1v2H0zM2 7h2v3H2zM5 5h1v5H5zM7 3h2v7H7zM10 0h1v10h-1z"/></svg>
        <time>9:18<br>2016/2/26</time>
        <button class="desktop" aria-label="显示桌面"></button>
    </div>
`);

define('excel-app', `
    <style>
        :host { display: flex; flex-direction: column; height: 100vh; background: #e6e6e6; }
        main { flex: 1; display: flex; min-height: 0; position: relative; }
        .book { flex: 1; display: flex; flex-direction: column; min-width: 0; }
        .view { flex: 1; display: flex; min-height: 0; }
    </style>
    <excel-header></excel-header>
    <excel-ribbon></excel-ribbon>
    <formula-bar></formula-bar>
    <main>
        <div class="book">
            <div class="view"><sheet-grid><bar-chart></bar-chart></sheet-grid><v-scroll></v-scroll></div>
            <sheet-tabs></sheet-tabs>
        </div>
        <format-pane></format-pane>
        <source-dialog></source-dialog>
    </main>
    <status-bar></status-bar>
    <task-bar></task-bar>
`);
</script>
</body>
</html>
